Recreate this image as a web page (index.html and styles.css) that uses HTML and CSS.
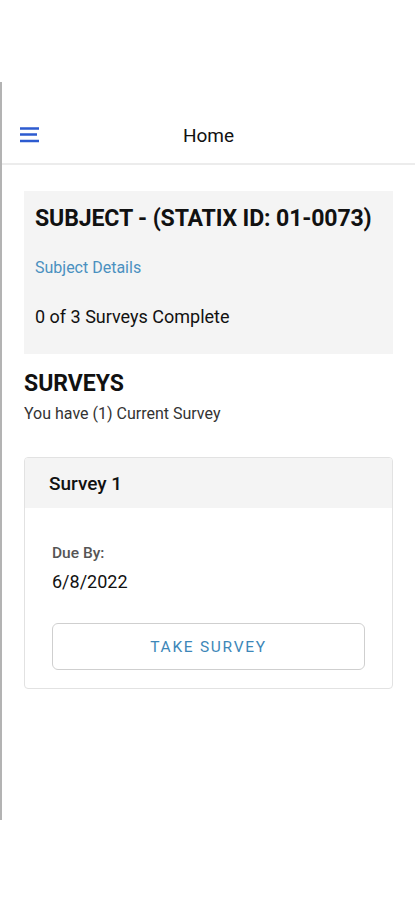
FILE: index.html
```html
<!DOCTYPE html>
<html>
<head>
<meta charset="utf-8">
<link rel="stylesheet" href="styles.css">
</head>
<body>
<div class="frame">
  <header class="topbar">
    <button class="menu" aria-label="Menu">
      <svg width="20" height="16" viewBox="0 0 20 16"><path d="M0 1.5h19M0 7.5h17M0 14h19" stroke="#2d5bd0" stroke-width="2.4" fill="none"/></svg>
    </button>
    <h1 class="title">Home</h1>
  </header>
  <main class="content">
    <section class="subject">
      <h2 class="subject-title">SUBJECT - (STATIX ID: 01-0073)</h2>
      <a class="subject-link">Subject Details</a>
      <p class="subject-progress">0 of 3 Surveys Complete</p>
    </section>
    <section class="surveys">
      <h2 class="surveys-title">SURVEYS</h2>
      <p class="surveys-sub">You have (1) Current Survey</p>
    </section>
    <section class="card">
      <div class="card-head">Survey 1</div>
      <div class="card-body">
        <div class="due-label">Due By:</div>
        <div class="due-date">6/8/2022</div>
        <button class="take">TAKE SURVEY</button>
      </div>
    </section>
  </main>
</div>
</body>
</html>
```
FILE: styles.css
```css
html, body { margin: 0; padding: 0; background: #fff; }
body { font-family: Roboto, "Liberation Sans", Arial, sans-serif; color: #111; }
.frame {
  margin-top: 82px;
  height: 738px;
  border-left: 2px solid #b3b3b3;
}
.topbar {
  height: 81px;
  border-bottom: 2px solid #ececec;
  display: flex;
  align-items: center;
  position: relative;
}
.menu {
  background: none; border: 0; padding: 0;
  margin-left: 18px; margin-top: 24px;
  width: 20px; height: 16px; display: flex;
}
.title {
  position: absolute; left: 0; right: 0; top: 42px;
  margin: 0; text-align: center;
  font-size: 19px; font-weight: 400; color: #111;
}
.content { padding: 26px 22px 0 22px; }
.subject {
  background: #f4f4f4;
  padding: 14px 11px 0;
  height: 149px;
}
.subject-title { margin: 0; font-size: 23.1px; line-height: 27px; font-weight: 700; letter-spacing: -0.15px; }
.subject-link { display: block; margin-top: 26px; color: #4a90c0; font-size: 16px; line-height: 20px; }
.subject-progress { margin: 28px 0 0; font-size: 18px; line-height: 22px; }
.surveys { padding-top: 16px; }
.surveys-title { margin: 0; font-size: 23px; line-height: 27px; font-weight: 700; }
.surveys-sub { margin: 7px 0 0; font-size: 16px; line-height: 20px; color: #333; }
.card {
  margin-top: 33px;
  border: 1px solid #e2e2e2;
  border-radius: 4px;
  overflow: hidden;
}
.card-head {
  background: #f4f4f4;
  height: 50px; line-height: 51px;
  padding-left: 24px;
  font-size: 19px; font-weight: 500;
}
.card-body { padding: 36px 27px 18px; }
.due-label { font-size: 15.5px; line-height: 18px; color: #555; font-weight: 500; }
.due-date { margin-top: 9px; font-size: 18px; line-height: 22px; }
.take {
  display: block; width: 100%;
  margin-top: 30px; height: 47px;
  border: 1px solid #cfcfcf; border-radius: 6px; background: #fff;
  font-family: Roboto, "Liberation Sans", sans-serif;
  font-size: 15.5px; letter-spacing: 1.7px; color: #3d87b8;
}
```
